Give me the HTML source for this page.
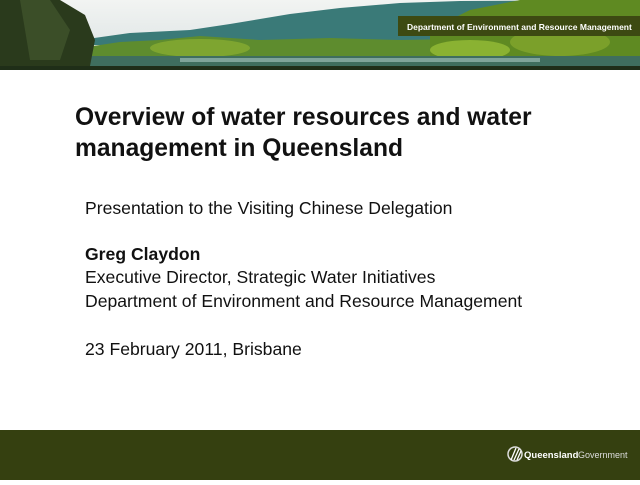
<!DOCTYPE html>
<html><head><style>
body{margin:0;width:640px;height:480px;background:#fff;position:relative;overflow:hidden;font-family:"Liberation Sans",Arial,sans-serif}
.b{position:absolute;left:0;top:0;width:640px;height:70px;overflow:hidden;background:linear-gradient(#f2f4f2,#d8e0e2)}
.t{position:absolute;left:75px;top:102px;font-size:24.6px;font-weight:bold;color:#111;line-height:31px}
.s{position:absolute;left:85px;font-size:17.6px;color:#111}
.f{position:absolute;left:0;top:430px;width:640px;height:50px;background:#354010}
</style></head><body>
<div class="b">
<svg width="640" height="70" viewBox="0 0 640 70">
<polygon points="80,40 130,33 190,30 230,24 290,14 340,8 400,3 460,1 640,0 640,45 80,45" fill="#3a7a78"/>
<polygon points="80,48 120,42 160,40 200,36 260,40 330,38 400,40 640,36 640,62 80,62" fill="#5e8c2e"/>
<polygon points="430,30 470,10 520,0 640,0 640,62 430,62" fill="#5f8a22"/>
<ellipse cx="470" cy="50" rx="40" ry="10" fill="#8ab232"/>
<ellipse cx="560" cy="42" rx="50" ry="14" fill="#7ba02a"/>
<ellipse cx="200" cy="48" rx="50" ry="9" fill="#7ea530"/>
<rect x="0" y="56" width="640" height="10" fill="#3f6e5e"/>
<rect x="180" y="58" width="360" height="4" fill="#7fa49a"/>
<rect x="0" y="66" width="640" height="4" fill="#1f2e18"/>
<polygon points="0,0 60,0 85,15 95,40 90,66 0,66" fill="#2a3a1c"/>
<polygon points="20,0 50,0 70,30 60,60 30,60" fill="#3b4e28"/>
<rect x="398" y="16" width="242" height="20" fill="#3d4a12"/>
<text x="407" y="30" font-size="8.5" font-weight="bold" fill="#fff" font-family="Liberation Sans Narrow, Liberation Sans, sans-serif">Department of Environment and Resource Management</text>
</svg>
</div>
<div class="t">Overview of water resources and water<br>management in Queensland</div>
<div class="s" style="top:198px">Presentation to the Visiting Chinese Delegation</div>
<div class="s" style="top:244px;font-weight:bold">Greg Claydon</div>
<div class="s" style="top:267px">Executive Director, Strategic Water Initiatives</div>
<div class="s" style="top:291px">Department of Environment and Resource Management</div>
<div class="s" style="top:339px">23 February 2011, Brisbane</div>
<div class="f">
<svg width="640" height="50">
<circle cx="515" cy="24" r="7" fill="none" stroke="#ddd" stroke-width="1.5"/>
<path d="M511 30 L516 18 M514 30 L519 19 M517 30 L521 21" stroke="#fff" stroke-width="1.3"/>
<text x="524" y="28" font-size="9.5" font-weight="bold" fill="#fff">Queensland</text>
<text x="578" y="28" font-size="9" fill="#ddd">Government</text>
</svg>
</div>
</body></html>
